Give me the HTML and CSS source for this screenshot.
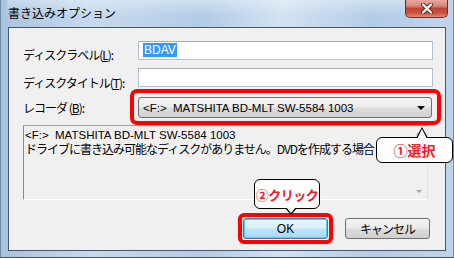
FILE: index.html
```html
<!DOCTYPE html>
<html>

<head>
    <title>書き込みオプション</title>
    <link rel="stylesheet" href="styles.css">
</head>

<body>
    <div class="window">
        <div class="titlebar">
            <span class="title">書き込みオプション</span>
            <div class="close-btn">
                <svg width="14" height="11" viewBox="0 0 14 11">
                    <path d="M3 1.5 L11 9.5 M11 1.5 L3 9.5" stroke="#5a1f18" stroke-width="4" stroke-linecap="round" />
                    <path d="M3 1.5 L11 9.5 M11 1.5 L3 9.5" stroke="#fff" stroke-width="2.4" stroke-linecap="round" />
                </svg>
            </div>
        </div>

        <div class="client">
            <div class="form">
                <label class="label">ディスクラベル(<u>L</u>):</label>
                <div class="input"><span class="selected">BDAV</span></div>

                <label class="label">ディスクタイトル(<u>T</u>):</label>
                <div class="input"></div>

                <label class="label">レコーダ (<u>B</u>):</label>
                <div class="combo-wrap">
                    <div class="combo">
                        <span class="combo-text">&lt;F:&gt;&nbsp; MATSHITA BD-MLT SW-5584 1003</span>
                        <span class="combo-arrow"></span>
                    </div>
                    <div class="mark mark-combo"></div>
                </div>
            </div>

            <div class="log">
                <div class="log-text">
                    <div class="log-line latin">&lt;F:&gt;&nbsp; MATSHITA BD-MLT SW-5584 1003</div>
                    <div class="log-line">ドライブに書き込み可能なディスクがありません。DVDを作成する場合</div>
                </div>
                <div class="scrollbar">
                    <span class="scroll-arrow up"></span>
                    <span class="scroll-arrow down"></span>
                </div>
            </div>

            <div class="buttons">
                <div class="btn-wrap">
                    <div class="btn btn-default">OK</div>
                    <div class="mark mark-ok"></div>
                </div>
                <div class="btn">キャンセル</div>
            </div>
        </div>

        <div class="callout callout-select">①選択</div>
        <div class="callout callout-click">②クリック</div>
    </div>
</body>

</html>
```

FILE: styles.css
```css
body {
    margin: 0;
    overflow: hidden;
    font-family: "Noto Sans CJK JP", "Liberation Sans", sans-serif;
    font-size: 12px;
    color: #000;
}

.window {
    position: relative;
    width: 454px;
    height: 258px;
    box-sizing: border-box;
    padding: 0 7px 6px 7px;
    display: flex;
    flex-direction: column;
    background: linear-gradient(90deg, #a9c3de 0%, #c6daee 20%, #b3cce6 45%, #d2e2f2 62%, #b4cde7 82%, #bed4eb 100%);
    border-left: 1px solid #6f8aa6;
    border-right: 1px solid #6f8aa6;
    border-bottom: 1px solid #3b5067;
}

.titlebar {
    height: 27px;
    flex: none;
    display: flex;
    align-items: center;
    justify-content: space-between;
    margin: 0 -1px;
    background: linear-gradient(180deg, rgba(255, 255, 255, 0.35), rgba(255, 255, 255, 0) 60%);
}

.title {
    padding-left: 1px;
    padding-bottom: 2px;
    font-size: 12px;
    color: #000;
}

.close-btn {
    align-self: flex-start;
    width: 43px;
    height: 18px;
    margin-right: -1px;
    box-sizing: border-box;
    border: 1px solid #6d2f28;
    border-top: none;
    border-radius: 0 0 5px 5px;
    background: linear-gradient(180deg, #e7a89e 0%, #d9877a 35%, #c24532 50%, #c8523f 75%, #e08a78 100%);
    display: flex;
    align-items: center;
    justify-content: center;
}

.client {
    flex: 1;
    background: #f0f0f0;
    border: 1px solid #44586d;
    padding: 13px 12px 0 14px;
}

.form {
    display: grid;
    grid-template-columns: 115px 1fr;
    align-items: center;
}

.label {
    letter-spacing: -1px;
    white-space: nowrap;
}

.input {
    height: 19px;
    box-sizing: border-box;
    border: 1px solid #b5c4d4;
    border-top-color: #abadb3;
    background: #fff;
    padding: 2px 0 0 4px;
    font-family: "Liberation Sans", sans-serif;
    font-size: 12px;
    line-height: 13px;
    margin-bottom: 8px;
}

.input + .label + .input {
    margin-bottom: 10px;
}

.selected {
    background: #3399ff;
    color: #fff;
    padding: 0 1px;
}

.combo-wrap {
    position: relative;
}

.combo {
    height: 21px;
    box-sizing: border-box;
    border: 1px solid #707070;
    border-radius: 3px;
    background: linear-gradient(180deg, #f4f4f4 0%, #ebebeb 48%, #dddddd 52%, #d2d2d2 100%);
    display: flex;
    align-items: center;
    justify-content: space-between;
    padding: 0 6px 0 4px;
    margin-right: 1px;
}

.combo-text {
    font-family: "Liberation Sans", sans-serif;
    font-size: 11.5px;
}

.combo-arrow {
    width: 0;
    height: 0;
    border-left: 4px solid transparent;
    border-right: 4px solid transparent;
    border-top: 4px solid #000;
}

.mark {
    position: absolute;
    border: 4px solid #ff0000;
    border-radius: 7px;
    pointer-events: none;
}

.mark-combo {
    top: -8px;
    left: -8px;
    right: -8px;
    bottom: -7px;
}

.log {
    display: flex;
    height: 75px;
    box-sizing: border-box;
    margin: 7px 5px 0 0;
    border-top: 1px solid #a0a0a0;
    border-left: 1px solid #8a8a8a;
    border-right: 1px solid #e3e3e3;
    border-bottom: 1px solid #fff;
    background: #f0f0f0;
}

.log-text {
    flex: 1;
    overflow: hidden;
    padding: 3px 0 0 1px;
}

.log-line {
    height: 13px;
    line-height: 13px;
    white-space: nowrap;
    letter-spacing: -1px;
}

.log-line.latin {
    font-family: "Liberation Sans", sans-serif;
    font-size: 11.5px;
    letter-spacing: 0;
}

.scrollbar {
    width: 17px;
    flex: none;
    display: flex;
    flex-direction: column;
    justify-content: space-between;
    align-items: center;
    padding: 6px 0 6px;
    box-sizing: border-box;
}

.scroll-arrow {
    width: 0;
    height: 0;
    border-left: 3px solid transparent;
    border-right: 3px solid transparent;
}

.scroll-arrow.up {
    border-bottom: 3px solid #a3a3a3;
}

.scroll-arrow.down {
    border-top: 3px solid #a3a3a3;
}

.buttons {
    display: flex;
    justify-content: flex-end;
    gap: 17px;
    margin: 18px 3px 0 0;
}

.btn-wrap {
    position: relative;
}

.btn {
    width: 85px;
    height: 21px;
    box-sizing: border-box;
    border: 1px solid #707070;
    border-radius: 3px;
    background: linear-gradient(180deg, #f3f3f3 0%, #ebebeb 48%, #dddddd 52%, #cfcfcf 100%);
    display: flex;
    align-items: center;
    justify-content: center;
    letter-spacing: -1px;
}

.btn-default {
    border-color: #3c7fb1;
    box-shadow: inset 0 0 0 1px #4bd0fb;
    background: linear-gradient(180deg, #eaf6fd 0%, #d9f0fc 48%, #bee6fd 52%, #a7d9f5 100%);
    font-family: "Liberation Sans", sans-serif;
    letter-spacing: 0;
}

.mark-ok {
    top: -5px;
    left: -5px;
    right: -5px;
    bottom: -5px;
    border-radius: 6px;
}

.callout {
    position: absolute;
    box-sizing: border-box;
    background: #fff;
    border: 1px solid #000;
    border-radius: 6px;
    color: #ee1c25;
    font-weight: bold;
    font-size: 14px;
    white-space: nowrap;
    display: flex;
    align-items: center;
    justify-content: center;
}

.callout::before,
.callout::after {
    content: "";
    position: absolute;
    width: 0;
    height: 0;
}

.callout-select {
    left: 375px;
    top: 137px;
    width: 77px;
    height: 26px;
}

.callout-select::before {
    top: -11px;
    left: 39px;
    border-left: 6px solid transparent;
    border-right: 6px solid transparent;
    border-bottom: 11px solid #000;
}

.callout-select::after {
    top: -9px;
    left: 40px;
    border-left: 5px solid transparent;
    border-right: 5px solid transparent;
    border-bottom: 10px solid #fff;
}

.callout-click {
    left: 253px;
    top: 179px;
    width: 66px;
    height: 30px;
    font-size: 13px;
    letter-spacing: -0.5px;
}

.callout-click::before {
    bottom: -7px;
    left: 30px;
    border-left: 6px solid transparent;
    border-right: 6px solid transparent;
    border-top: 7px solid #000;
}

.callout-click::after {
    bottom: -5px;
    left: 31px;
    border-left: 5px solid transparent;
    border-right: 5px solid transparent;
    border-top: 6px solid #fff;
}
```
